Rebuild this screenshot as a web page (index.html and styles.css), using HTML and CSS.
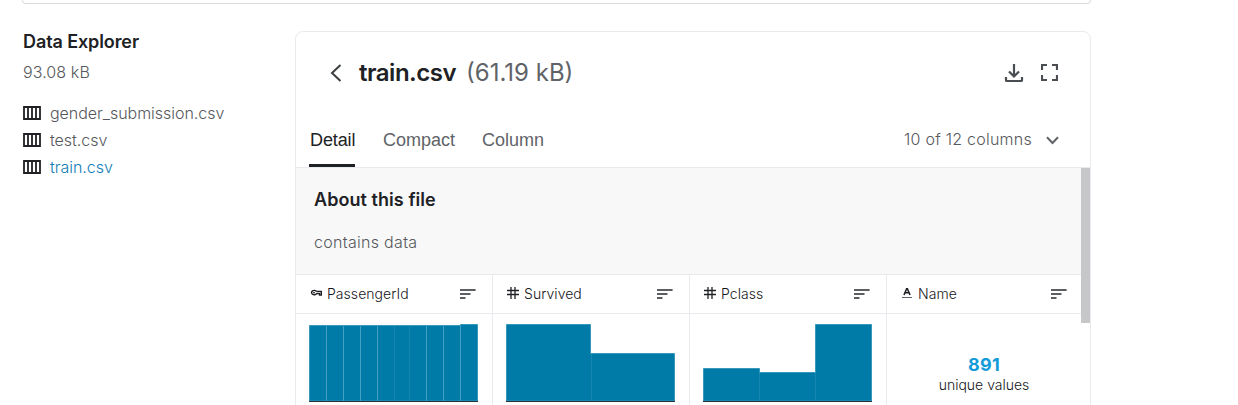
FILE: index.html
```html
<!DOCTYPE html>
<html lang="en">
<head>
<meta charset="utf-8">
<title>Data Explorer</title>
<link rel="stylesheet" href="styles.css">
</head>
<body>
<svg width="0" height="0" class="defs">
  <symbol id="table" viewBox="0 0 18 14"><path d="M1 1h16v12H1zM5 1v12M9 1v12M13 1v12" fill="none" stroke="#202124" stroke-width="1.8"/></symbol>
  <symbol id="sort" viewBox="0 0 16 10"><path d="M0 1h15.6M0 5h10.5M0 9h5.500" stroke="#5c5e62" stroke-width="1.9"/></symbol>
  <symbol id="hash" viewBox="0 0 12 12"><path d="M0 3.500h12M0 7.500h12M4 0v12M8 0v12" stroke="#202124" stroke-width="1.3"/></symbol>
</svg>
<div class="page">
  <div class="previous"></div>
  <div class="explorer">
    <aside class="sidebar">
      <h2 class="side-title">Data Explorer</h2>
      <p class="side-size">93.08 kB</p>
      <ul class="files">
        <li class="file"><svg class="table-icon"><use href="#table"/></svg>gender_submission.csv</li>
        <li class="file"><svg class="table-icon"><use href="#table"/></svg>test.csv</li>
        <li class="file file-active"><svg class="table-icon"><use href="#table"/></svg>train.csv</li>
      </ul>
    </aside>
    <main class="panel">
      <header class="head">
        <svg class="back" viewBox="0 0 12 18"><path d="M10.500 1L2 9l8.500 8" fill="none" stroke="#3c4043" stroke-width="2"/></svg>
        <h1 class="name">train.csv</h1>
        <span class="size">(61.19 kB)</span>
        <svg class="download" viewBox="0 0 20 20"><path d="M10 1v12M5 8.500l5 5 5-5M2 14v3.200q0 .8.8.8h14.400q.8 0 .8-.8V14" fill="none" stroke="#4a4d51" stroke-width="2.200"/></svg>
        <svg class="full" viewBox="0 0 17 17"><path d="M1 6V1h5M11 1h5v5M16 11v5h-5M6 16H1v-5" fill="none" stroke="#4a4d51" stroke-width="2.200"/></svg>
      </header>
      <nav class="tabs">
        <span class="tab tab-active">Detail</span>
        <span class="tab">Compact</span>
        <span class="tab">Column</span>
        <span class="count">10 of 12 columns</span>
        <svg class="chevron" viewBox="0 0 13 9"><path d="M1 1.300l5.500 5.700L12 1.300" fill="none" stroke="#5f6368" stroke-width="2"/></svg>
      </nav>
      <div class="body">
        <div class="content">
          <section class="about">
            <h3 class="about-title">About this file</h3>
            <p class="about-text">contains data</p>
          </section>
          <div class="grid">
            <div class="col">
              <div class="col-head"><svg class="type" viewBox="0 0 12 12"><path d="M6.600 4.500H11.300V8H9.500V6.600H6.600A2.700 2.200 0 1 1 6.600 4.500" fill="none" stroke="#202124" stroke-width="1.4"/><circle cx="4" cy="5.600" r=".9" fill="#202124"/></svg>PassengerId<svg class="sort"><use href="#sort"/></svg></div>
              <svg class="chart" viewBox="0 0 169 79"><path class="bars" d="M.5 77V1.500H151.500V.5H168.500V77z"/><path class="lines" d="M17.500 2v75M34.500 2v75M51.500 2v75M68.500 2v75M117.500 2v75M134.500 2v75M151.500 2v75"/><path class="lines faint" d="M85.500 2v75M100.500 2v75"/><path class="axis" d="M0 77.500h169"/></svg>
            </div>
            <div class="col">
              <div class="col-head"><svg class="type"><use href="#hash"/></svg>Survived<svg class="sort"><use href="#sort"/></svg></div>
              <svg class="chart" viewBox="0 0 169 79"><path class="bars" d="M.5 77V.5H84.500V29.500H168.500V77z"/><path class="lines faint" d="M85.500 30v47"/><path class="axis" d="M0 77.500h169"/></svg>
            </div>
            <div class="col">
              <div class="col-head"><svg class="type"><use href="#hash"/></svg>Pclass<svg class="sort"><use href="#sort"/></svg></div>
              <svg class="chart" viewBox="0 0 169 79"><path class="bars" d="M.5 77V44.500H56.500V48.500H112.500V.5H168.500V77z"/><path class="lines faint" d="M56.500 49v28M112.500 49v28"/><path class="axis" d="M0 77.500h169"/></svg>
            </div>
            <div class="col">
              <div class="col-head"><svg class="type" viewBox="0 0 12 12"><path d="M3 8l2.600-6.200h.8L9 8M4 5.800h4" fill="none" stroke="#202124" stroke-width="1.6"/><path d="M1 10.500h10" stroke="#5f6368"/></svg>Name<svg class="sort"><use href="#sort"/></svg></div>
              <div class="unique"><strong class="number">891</strong><span class="label">unique values</span></div>
            </div>
          </div>
        </div>
        <div class="scroll"><div class="thumb"></div></div>
      </div>
    </main>
  </div>
</div>
</body>
</html>
```
FILE: styles.css
```css
* { box-sizing: border-box; }
body { margin: 0; height: 405px; overflow: hidden; background: #fff; color: #202124; font-family: Inter, sans-serif; }
h1, h2, h3, p, ul { margin: 0; padding: 0; }
svg { flex: none; display: block; }
.defs { display: none; }
.page { width: 1091px; padding-left: 22px; }
.previous { height: 4px; border: 1px solid #dadce0; border-top: 0; border-radius: 0 0 4px 4px; }
.explorer { display: flex; margin-top: 27px; }
.sidebar { width: 273px; padding-left: 1px; }
.side-title { font-size: 18px; line-height: 22px; font-weight: 600; letter-spacing: -.1px; }
.side-size { margin-top: 8px; font-size: 16px; line-height: 22px; font-weight: 300; letter-spacing: .1px; color: #56585d; }
.files { margin-top: 16px; list-style: none; }
.file { display: flex; align-items: center; gap: 8px; height: 27px; font-size: 16px; font-weight: 300; letter-spacing: -.03px; color: #56585d; }
.file-active { color: #0f7db5; }
.table-icon { width: 18px; height: 14px; margin-right: 1px; }
.panel { width: 796px; height: 390px; border: 1px solid #e8eaed; border-radius: 8px 8px 0 0; }
.head { display: flex; align-items: center; height: 82px; padding: 0 32px 1px 34px; }
.back { width: 12px; height: 18px; }
.name { margin-left: 17px; font-size: 24px; font-weight: 600; letter-spacing: -.48px; }
.size { margin-left: 10px; font-size: 24px; color: #5f6368; }
.download { width: 20px; height: 20px; margin-left: auto; }
.full { width: 17px; height: 17px; margin-left: 17px; }
.tabs { display: flex; align-items: center; height: 54px; border-bottom: 1px solid #e8eaed; padding: 0 31px 0 13px; font-family: "Liberation Sans", sans-serif; font-size: 18px; color: #5f6368; }
.tab { height: 53px; line-height: 52px; margin-right: 27px; border-bottom: 3px solid transparent; }
.tab-active { width: 46px; margin-right: 28px; padding-left: 1px; letter-spacing: -.1px; color: #202124; border-bottom-color: #202124; border-radius: 2px 2px 0 0; }
.count { margin-left: auto; padding-bottom: 3px; font: 300 16px Inter, sans-serif; letter-spacing: .25px; color: #56585d; }
.chevron { width: 13px; height: 9px; margin-left: 14px; }
.body { display: flex; }
.content { width: 785px; }
.about { height: 107px; padding: 20px 18px 0; background: #f8f8f8; border-bottom: 1px solid #e8eaed; }
.about-title { font-size: 18px; line-height: 24px; font-weight: 600; letter-spacing: .06px; }
.about-text { margin-top: 18px; font-size: 16px; line-height: 24px; font-weight: 300; letter-spacing: .3px; color: #56585d; }
.grid { display: grid; grid-template-columns: 197px 197px 197px 194px; }
.col { height: 140px; border-right: 1px solid #e8eaed; }
.col:last-child { border-right: 0; }
.col-head { display: flex; align-items: center; height: 39px; border-bottom: 1px solid #e8eaed; padding: 0 16px 2px 14px; font-size: 14px; font-weight: 300; letter-spacing: .05px; color: #16171a; }
.col:last-child .col-head { padding-right: 14px; }
.type { width: 12px; height: 12px; margin-right: 5px; }
.sort { width: 16px; height: 10px; margin: 1px 0 0 auto; }
.chart { width: 169px; height: 79px; margin: 10px 0 0 13px; }
.bars { fill: #007ba8; stroke: #3698ba; }
.lines { fill: none; stroke: #459fc0; }
.faint { stroke: #1686b0; }
.axis { stroke: #263238; }
.unique { display: flex; flex-direction: column; align-items: center; padding: 39px 0 0; }
.number { font-size: 18px; line-height: 23px; font-weight: 700; letter-spacing: .3px; color: #159bd9; }
.label { font-size: 14px; line-height: 17px; font-weight: 300; color: #16171a; }
.scroll { width: 9px; }
.thumb { height: 155px; background: #c6c7c8; }
```
